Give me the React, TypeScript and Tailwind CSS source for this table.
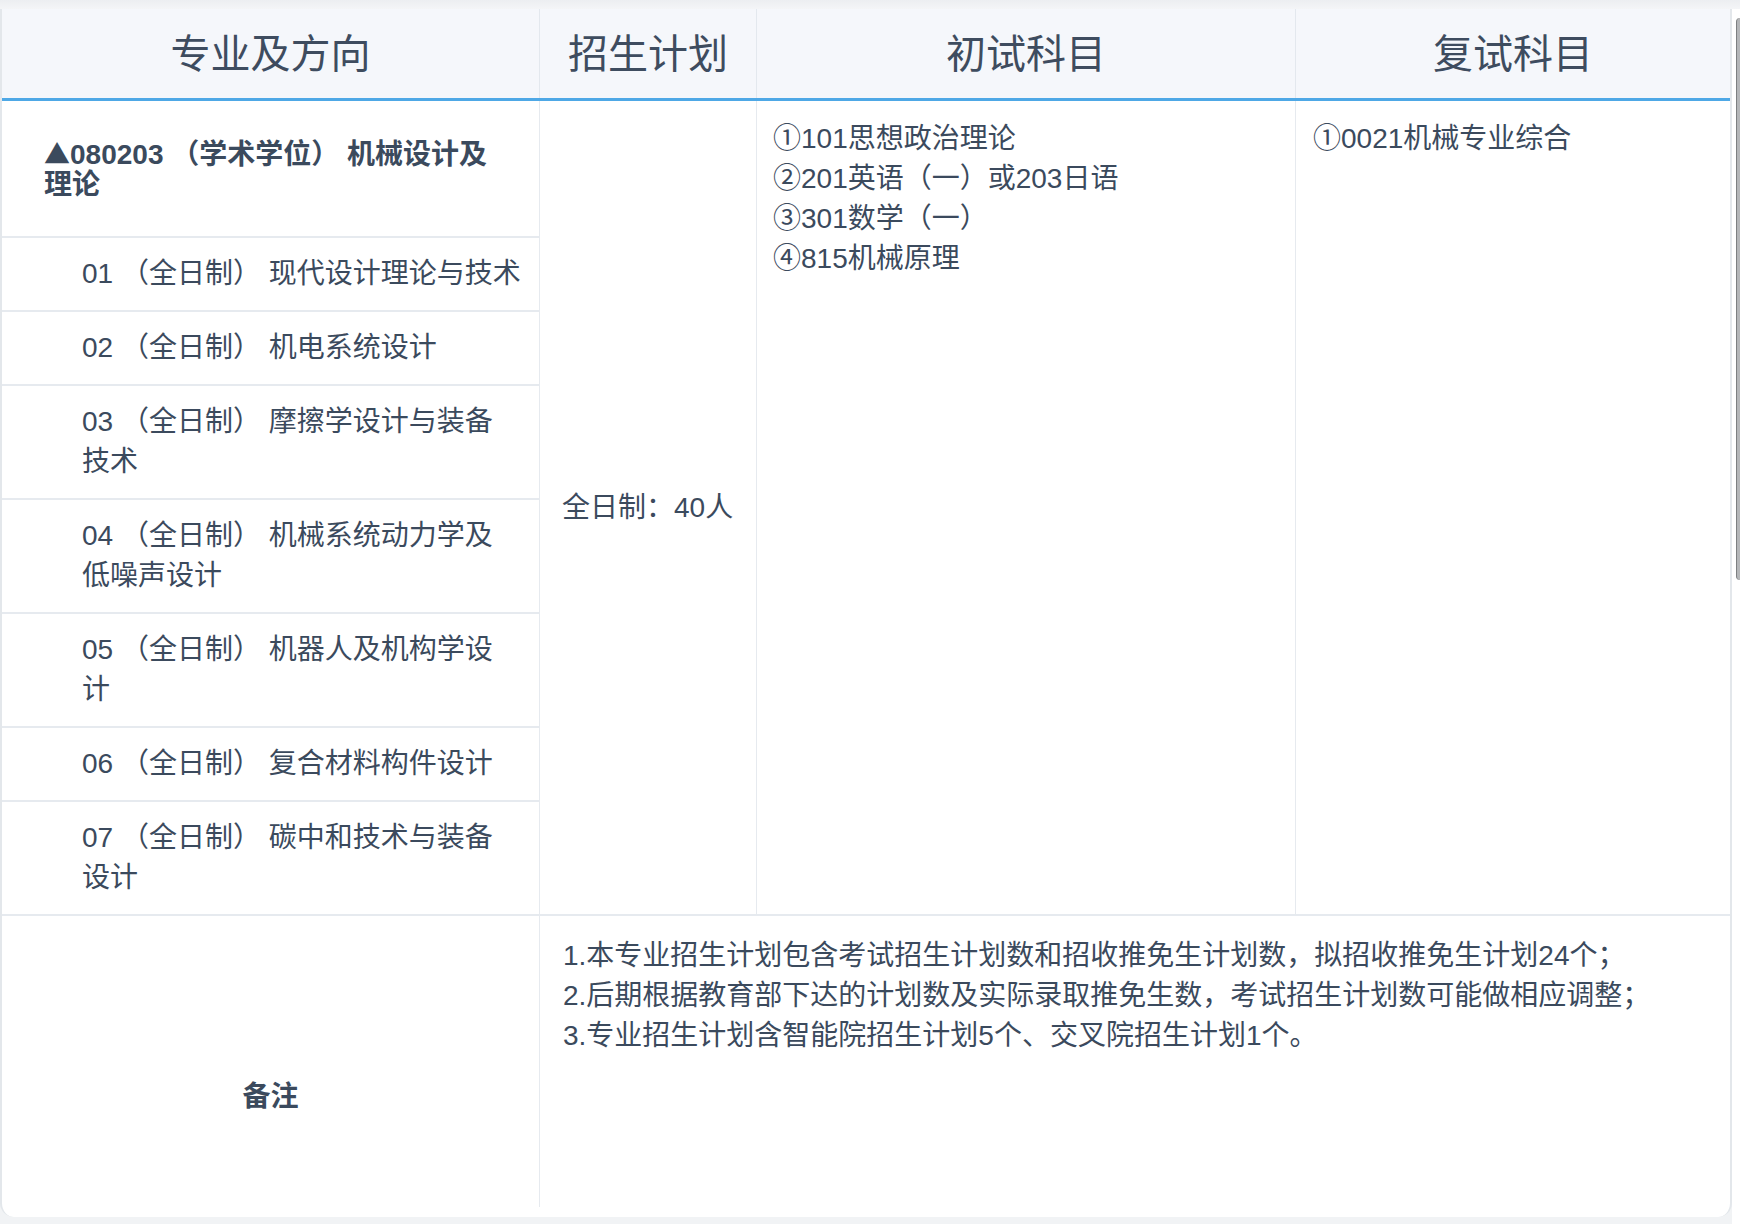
import React from "react";

const subRows: string[][] = [
  ["01 （全日制） 现代设计理论与技术"],
  ["02 （全日制） 机电系统设计"],
  ["03 （全日制） 摩擦学设计与装备", "技术"],
  ["04 （全日制） 机械系统动力学及", "低噪声设计"],
  ["05 （全日制） 机器人及机构学设", "计"],
  ["06 （全日制） 复合材料构件设计"],
  ["07 （全日制） 碳中和技术与装备", "设计"],
];

export default function App() {
  return (
    <div className="w-[1740px] h-[1224px] bg-[#f1f3f5] flex font-['Liberation_Sans','Noto_Sans_CJK_SC',sans-serif] text-[#3b4a5d] overflow-hidden">
      <div className="w-[1732px] flex flex-col">
        <div className="h-[9px] bg-gradient-to-b from-[#eceef1] to-[#f4f5f7]" />
        <div className="h-[1208px] bg-white border-l-2 border-r-2 border-[#e3e7eb] rounded-b-[14px] pb-[10px] flex flex-col">
          {/* header */}
          <div className="flex h-[89px] bg-[#f5f7fb] text-[40px] text-[#3e4c5f]">
            <div className="w-[538px] border-r border-[#e3e8ee] flex items-center justify-center">专业及方向</div>
            <div className="w-[217px] border-r border-[#e3e8ee] flex items-center justify-center">招生计划</div>
            <div className="w-[539px] border-r border-[#e3e8ee] flex items-center justify-center">初试科目</div>
            <div className="flex-1 flex items-center justify-center">复试科目</div>
          </div>
          <div className="h-[3px] bg-[#4ea8e6]" />
          {/* body */}
          <div className="flex border-b-2 border-[#e6eaef] text-[28px]">
            <div className="w-[538px] border-r border-[#e6eaef] flex flex-col">
              <div className="h-[137px] border-b-2 border-[#e6eaef] flex items-center pl-[42px] pr-[20px] font-bold leading-[30px]">
                <div>
                  <div className="whitespace-nowrap">
                    <span className="font-['Noto_Sans_CJK_SC'] text-[26px]">▲</span>080203 （学术学位） 机械设计及
                  </div>
                  <div>理论</div>
                </div>
              </div>
              {subRows.map((lines, i) => (
                <div
                  key={i}
                  className={
                    i < subRows.length - 1
                      ? "pl-[80px] py-4 leading-[40px] border-b-2 border-[#e6eaef]"
                      : "pl-[80px] py-4 leading-[40px]"
                  }
                >
                  {lines.map((l, j) => (
                    <div key={j} className="whitespace-pre">{l}</div>
                  ))}
                </div>
              ))}
            </div>
            <div className="w-[217px] border-r border-[#e6eaef] flex items-center pl-[22px] whitespace-nowrap">
              全日制：40人
            </div>
            <div className="w-[539px] border-r border-[#e6eaef] pl-[16px] pt-[18px] leading-[40px]">
              <div>①101思想政治理论</div>
              <div>②201英语（一）或203日语</div>
              <div>③301数学（一）</div>
              <div>④815机械原理</div>
            </div>
            <div className="flex-1 pl-[17px] pt-[18px] leading-[40px]">
              <div>①0021机械专业综合</div>
            </div>
          </div>
          {/* remarks */}
          <div className="flex flex-1 text-[28px]">
            <div className="w-[538px] border-r border-[#e6eaef] text-center font-bold pt-[161px] leading-[40px]">备注</div>
            <div className="flex-1 pl-[23px] pt-[20px] leading-[40px] whitespace-nowrap">
              <div>1.本专业招生计划包含考试招生计划数和招收推免生计划数，拟招收推免生计划24个；</div>
              <div>2.后期根据教育部下达的计划数及实际录取推免生数，考试招生计划数可能做相应调整；</div>
              <div>3.专业招生计划含智能院招生计划5个、交叉院招生计划1个。</div>
            </div>
          </div>
        </div>
      </div>
      <div className="w-[8px] bg-white flex flex-col">
        <div className="h-[9px] bg-gradient-to-b from-[#eceef1] to-[#f4f5f7]" />
        <div className="pt-[9px] flex justify-end">
          <div className="w-[4px] h-[562px] rounded-l-full bg-[#b4b6b8] border-l border-[#7d7f81]" />
        </div>
      </div>
    </div>
  );
}
